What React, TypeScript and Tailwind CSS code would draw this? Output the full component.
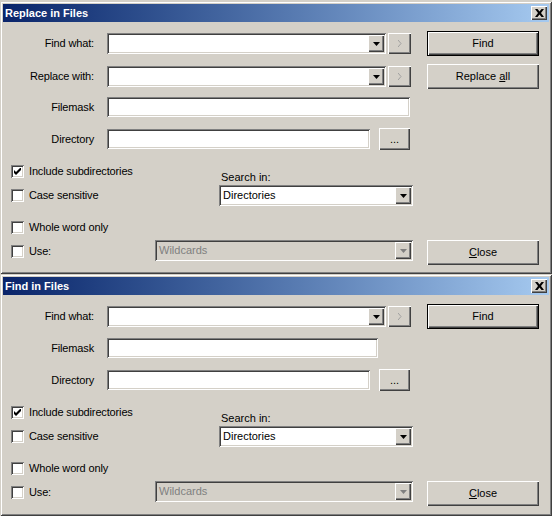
import React from "react";

const FONT = "font-['Liberation_Sans',Arial,sans-serif]";

const raised =
  "bg-[#d4d0c8] shadow-[inset_1px_1px_#ffffff,inset_-1px_-1px_#404040,inset_-2px_-2px_#808080]";
const sunken =
  "shadow-[inset_1px_1px_#808080,inset_-1px_-1px_#ffffff,inset_2px_2px_#404040,inset_-2px_-2px_#d4d0c8]";

const Arrow = ({ disabled }: { disabled?: boolean }) => (
  <svg width="7" height="4" viewBox="0 0 7 4">
    <path d="M0 0h7L3.5 4z" fill={disabled ? "#808080" : "#000"} />
  </svg>
);

const Combo = ({
  w,
  text,
  disabled,
}: {
  w: string;
  text?: string;
  disabled?: boolean;
}) => (
  <div
    className={`${w} h-[21px] ${sunken} ${
      disabled ? "bg-[#d4d0c8]" : "bg-white"
    } flex items-stretch p-[2px]`}
  >
    <div
      className={`flex-1 flex items-center pl-[2px] text-[11px] ${
        disabled ? "text-[#808080]" : "text-black"
      }`}
    >
      {text}
    </div>
    <div className={`w-[16px] ${raised} flex items-center justify-center`}>
      <Arrow disabled={disabled} />
    </div>
  </div>
);

const Field = ({ w }: { w: string }) => (
  <div className={`${w} h-[20px] bg-white ${sunken}`} />
);

const Button = ({
  children,
  isDefault,
  className = "",
}: {
  children: React.ReactNode;
  isDefault?: boolean;
  className?: string;
}) => (
  <div
    className={`w-[112px] h-[25px] ${
      isDefault ? "border border-black" : ""
    } ${className}`}
  >
    <div
      className={`w-full h-full ${raised} flex items-center justify-center text-[11px] text-black`}
    >
      {children}
    </div>
  </div>
);

const NextBtn = () => (
  <div
    className={`w-[23px] h-[21px] ${raised} flex items-center justify-center ml-[2px]`}
  >
    <svg width="4" height="7" viewBox="0 0 4 7">
      <path d="M0 0l3 3.5L0 7" stroke="#a0a0a0" fill="none" />
    </svg>
  </div>
);

const Check = ({ checked }: { checked?: boolean }) => (
  <div
    className={`w-[13px] h-[13px] bg-white ${sunken} flex items-center justify-center`}
  >
    {checked && (
      <svg width="7" height="7" viewBox="0 0 7 7">
        <path d="M0 2v3l2 2l5-5V-1L2 4z" fill="#000" />
      </svg>
    )}
  </div>
);

const CheckRow = ({
  label,
  checked,
  className = "",
}: {
  label: string;
  checked?: boolean;
  className?: string;
}) => (
  <div className={`flex items-center h-[13px] pl-[8px] ${className}`}>
    <Check checked={checked} />
    <span className="ml-[5px] text-[11px] text-black leading-none tracking-[-0.15px]">
      {label}
    </span>
  </div>
);

const Label = ({ children }: { children: React.ReactNode }) => (
  <div className="w-[91px] mr-[13px] text-right text-[11px] text-black tracking-[-0.15px]">
    {children}
  </div>
);

const TitleBar = ({ title }: { title: string }) => (
  <div className="h-[18px] mx-[3px] bg-linear-to-r from-[#0a246a] to-[#a6caf0] flex items-center justify-between pl-[2px] pr-[2px]">
    <span className="text-white font-bold text-[11px]">{title}</span>
    <div
      className={`w-[16px] h-[14px] ${raised} flex items-center justify-center`}
    >
      <svg width="9" height="8" viewBox="0 0 9 8">
        <path
          d="M0 0h2.5l2 2.5l2-2.5H9L6 4l3 4H6.5l-2-2.5l-2 2.5H0l3-4z"
          fill="#000"
        />
      </svg>
    </div>
  </div>
);

const Options = () => (
  <>
    <div className="flex">
      <div className="w-[216px] pt-[4px]">
        <CheckRow label="Include subdirectories" checked />
        <CheckRow label="Case sensitive" className="mt-[11px]" />
      </div>
      <div className="pt-[10px]">
        <div className="text-[11px] text-black ml-[2px] leading-[13px]">
          Search in:
        </div>
        <div className="mt-[1px]">
          <Combo w="w-[194px]" text="Directories" />
        </div>
      </div>
    </div>
    <CheckRow label="Whole word only" className="mt-[15px]" />
    <div className="flex items-start h-[25px] mt-[6px]">
      <div className="w-[152px] pt-[5px]">
        <CheckRow label="Use:" />
      </div>
      <Combo w="w-[258px]" text="Wildcards" disabled />
      <Button className="ml-[14px]">
        <span>
          <u>C</u>lose
        </span>
      </Button>
    </div>
  </>
);

const Dialog = ({
  title,
  replace,
  h,
}: {
  title: string;
  replace?: boolean;
  h: string;
}) => (
  <div
    className={`w-[552px] ${h} pt-[3px] bg-[#d4d0c8] shadow-[inset_1px_1px_#d4d0c8,inset_-1px_-1px_#404040,inset_2px_2px_#ffffff,inset_-2px_-2px_#808080]`}
  >
    <TitleBar title={title} />
    <div className="pl-[3px]">
      <div className="flex items-center h-[25px] mt-[9px]">
        <Label>Find what:</Label>
        <Combo w="w-[279px]" />
        <NextBtn />
        <Button isDefault className="ml-[16px]">
          Find
        </Button>
      </div>
      {replace && (
        <div className="flex items-center h-[25px] mt-[8px]">
          <Label>Replace with:</Label>
          <Combo w="w-[279px]" />
          <NextBtn />
          <Button className="ml-[16px]">
            <span>
              Replace <u>a</u>ll
            </span>
          </Button>
        </div>
      )}
      <div
        className={`flex items-center h-[20px] ${
          replace ? "mt-[8px]" : "mt-[9px]"
        }`}
      >
        <Label>Filemask</Label>
        <Field w={replace ? "w-[303px]" : "w-[271px]"} />
      </div>
      <div className="flex items-center h-[22px] mt-[11px]">
        <Label>Directory</Label>
        <Field w="w-[263px]" />
        <div
          className={`w-[31px] h-[22px] ml-[9px] ${raised} flex items-center justify-center text-[11px] text-black`}
        >
          ...
        </div>
      </div>
      <div className="mt-[11px]">
        <Options />
      </div>
    </div>
  </div>
);

export default function App() {
  return (
    <div className={`w-[552px] h-[516px] bg-[#d4d0c8] pt-[1px] ${FONT}`}>
      <Dialog title="Replace in Files" replace h="h-[273px]" />
      <Dialog title="Find in Files" h="h-[242px]" />
    </div>
  );
}
